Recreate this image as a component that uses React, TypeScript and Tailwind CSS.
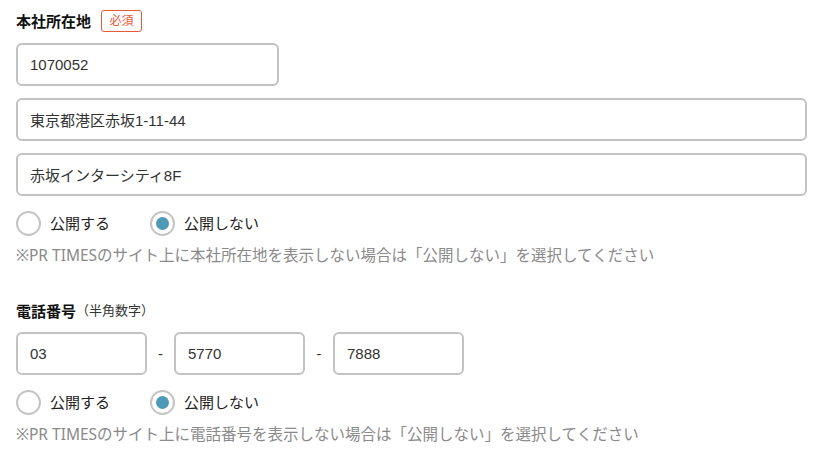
import { useState } from "react";

const jp = "font-['Noto_Sans','Noto_Sans_CJK_JP',sans-serif]";
const field =
  "h-[43px] rounded-[6px] border-2 border-[#c2c2c2] bg-white px-3 text-[15px] text-[#333] outline-none font-['Liberation_Sans','Noto_Sans_CJK_JP',sans-serif]";

function Radio({ checked, label, onClick }: { checked: boolean; label: string; onClick: () => void }) {
  return (
    <button type="button" onClick={onClick} className="flex items-center gap-[9px]">
      <span className="flex h-[25px] w-[25px] items-center justify-center rounded-full border-2 border-[#c4c4c4] bg-white">
        {checked && <span className="h-[13px] w-[13px] rounded-full bg-[#4c9ab5]" />}
      </span>
      <span className="text-[15px] text-[#222]">{label}</span>
    </button>
  );
}

function PublishChoice({ note }: { note: string }) {
  const [open, setOpen] = useState(false);
  return (
    <>
      <div className="mt-[15px] flex items-center gap-[40px]">
        <Radio checked={open} label="公開する" onClick={() => setOpen(true)} />
        <Radio checked={!open} label="公開しない" onClick={() => setOpen(false)} />
      </div>
      <p className="mt-[8px] text-[15.5px] leading-[22px] text-[#8a8a8a]">{note}</p>
    </>
  );
}

export default function App() {
  return (
    <div className={`min-h-[458px] bg-white pl-4 pr-[28px] pt-[10px] ${jp}`}>
      {/* 本社所在地 */}
      <div className="flex h-[22px] items-center gap-[10px]">
        <span className="text-[15px] font-bold text-[#111]">本社所在地</span>
        <span className="flex h-[22px] w-[41px] items-center justify-center rounded-[3px] border border-[#e8593a] text-[12px] text-[#e8593a]">
          必須
        </span>
      </div>
      <div className="mt-[11px] flex flex-col gap-[12px]">
        <input readOnly defaultValue="1070052" className={`${field} w-[263px]`} />
        <input readOnly defaultValue="東京都港区赤坂1-11-44" className={`${field} w-full`} />
        <input readOnly defaultValue="赤坂インターシティ8F" className={`${field} w-full`} />
      </div>
      <PublishChoice note="※PR TIMESのサイト上に本社所在地を表示しない場合は「公開しない」を選択してください" />

      {/* 電話番号 */}
      <div className="mt-[34px] flex h-[22px] items-center">
        <span className="text-[15px] font-bold text-[#111]">電話番号</span>
        <span className="text-[13px] text-[#333]">（半角数字）</span>
      </div>
      <div className="mt-[10px] flex items-center">
        <input readOnly defaultValue="03" className={`${field} w-[131px]`} />
        <span className="w-[27px] text-center text-[15px] text-[#333]">-</span>
        <input readOnly defaultValue="5770" className={`${field} w-[131px]`} />
        <span className="w-[28px] text-center text-[15px] text-[#333]">-</span>
        <input readOnly defaultValue="7888" className={`${field} w-[131px]`} />
      </div>
      <PublishChoice note="※PR TIMESのサイト上に電話番号を表示しない場合は「公開しない」を選択してください" />
    </div>
  );
}
